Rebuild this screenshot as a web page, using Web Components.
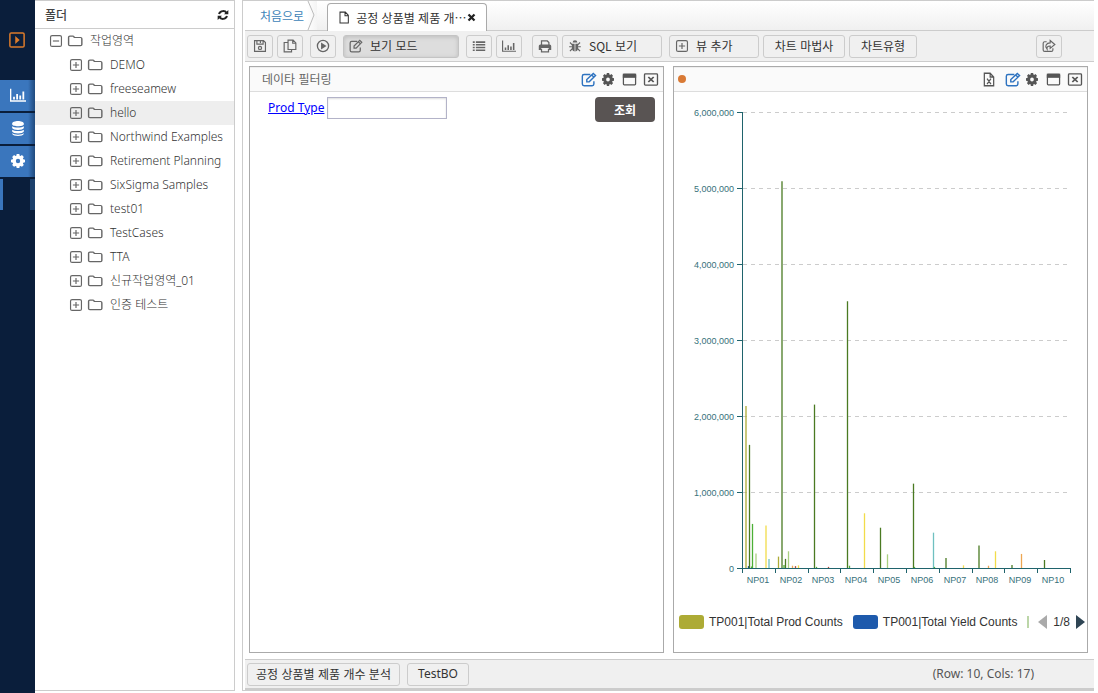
<!DOCTYPE html>
<html lang="ko">
<head>
<meta charset="utf-8">
<title>공정 상품별 제품 개수 분석</title>
<style>
html,body{height:100%;margin:0}
body{--kr:"Noto Sans CJK KR","Noto Sans",sans-serif;font:12px/16px "Noto Sans","Noto Sans CJK KR",sans-serif;color:#333;background:#fff}
</style>
</head>
<body>
<bi-app></bi-app>
<script>
const ICONS={
play:'<rect x="1" y="1" width="16" height="16" rx="1.5" fill="none" stroke="currentColor" stroke-width="1.700"/><path d="M7 4.500l5 4.500-5 4.500z"/>',
chart:'<path d="M0 2h1.5v13H18v1.5H0zM3.500 11h2v3h-2zM7 8h2v6H7zM10.500 9.500h2V14h-2zM14 5h2v9h-2z"/>',
db:'<path d="M1.500 4c0-4 15-4 15 0v.8c0 3-15 3-15 0zM1.500 7c2 2 13 2 15 0v2c-1 3-14 3-15 0zM1.500 11c2 2 13 2 15 0v2c-1 3-14 3-15 0zM1.500 15c2 2 13 2 15 0v.5c-1 3.300-14 3.300-15 0z"/>',
gear:'<path fill-rule="evenodd" d="M7.300 2h3.400l.5 2.200 1 .4 1.900-1.200 2.400 2.400-1.200 1.900.4 1 2.300.6v3.400l-2.300.5-.4 1 1.200 1.900-2.400 2.400-1.900-1.200-1 .4-.5 2.300H7.300l-.5-2.300-1-.4-1.900 1.200-2.400-2.400 1.200-1.900-.4-1L0 12.700V9.300l2.300-.6.4-1-1.200-1.900 2.400-2.400 1.900 1.200 1-.4zM9 8.200a2.800 2.800 0 1 0 0 5.600 2.800 2.800 0 0 0 0-5.600z" transform="translate(0 -2)"/>',
refresh:'<path fill="none" stroke="currentColor" stroke-width="3" d="M3 7.500C5 2 12 2 14.500 6M15 10.500C13 16 6 16 3.500 12"/><path d="M17 1.500v6.500h-6.500zM1 16.500V10h6.500z"/>',
folder:'<path fill="none" stroke="currentColor" stroke-width="1.6" d="M1.800 4.300q0-1.500 1.500-1.500h3.500q1 0 1.400 1.700h7q1.500 0 1.500 1.500v7.500q0 1.500-1.500 1.500h-12q-1.400 0-1.400-1.500z"/>',
plus:'<rect x="2" y="2" width="14" height="14" rx="2" fill="none" stroke="currentColor" stroke-width="1.500"/><path fill="none" stroke="currentColor" stroke-width="1.500" d="M9 5v8M5 9h8"/>',
minus:'<rect x="2" y="2" width="14" height="14" rx="2" fill="none" stroke="currentColor" stroke-width="1.500"/><path fill="none" stroke="currentColor" stroke-width="1.500" d="M5 9h8"/>',
file:'<path fill="none" stroke="currentColor" stroke-width="1.500" d="M3 1.500h8l4.500 4.500v10.500H3zM10.500 1.500V6.500h5"/>',
close:'<path fill="none" stroke="currentColor" stroke-width="4.500" d="M3 3l12 12M15 3L3 15"/>',
save:'<path fill="none" stroke="currentColor" stroke-width="1.500" d="M2 2h11.500L16 4.500V16H2zM5 2v4.500h8V2M9.500 3v2"/><circle cx="9" cy="11.500" r="2" fill="none" stroke="currentColor" stroke-width="1.600"/>',
copy:'<path fill="none" stroke="currentColor" stroke-width="1.500" d="M6.500 1.500h6.500l3.500 3.500v8.500h-10zM12.500 1.500V5.500h4M6.500 4.500h-5v12h9.500v-3"/>',
run:'<circle cx="9" cy="9" r="7.200" fill="none" stroke="currentColor" stroke-width="1.700"/><path d="M6.500 4.500L13.500 9l-7 4.500z"/>',
edit:'<path fill="none" stroke="currentColor" stroke-width="1.600" d="M10.500 3H3.500Q1.500 3 1.500 5v9.500q0 2 2 2h9q2 0 2-2V11M6.500 11.800V9L13.800 1.700l2.600 2.600L9.200 11.800zM12 3.500l2.700 2.700"/>',
list:'<path d="M1 3h2.500v2H1zM5 3h12v2H5zM1 6.500h2.500v2H1zM5 6.500h12v2H5zM1 10h2.500v2H1zM5 10h12v2H5zM1 13.500h2.500v2H1zM5 13.500h12v2H5z"/>',
print:'<path fill="none" stroke="currentColor" stroke-width="1.600" d="M4.500 8V2.500h7.500l2 2V8M4.500 12.500v4h9v-4"/><path d="M1 9q0-2 2-2h12q2 0 2 2v5h-3v-2.500H4V14H1z"/>',
bug:'<path d="M6 4.500a3 3 0 0 1 6 0zM5 6h3.500v10C6 16 5 13.500 5 11zM9.500 6H13v5c0 2.500-1 5-3.500 5z"/><path fill="none" stroke="currentColor" stroke-width="1.500" d="M2.500 4.500L5.500 7.500M1.500 10H5M2.500 15.500l3-3M15.500 4.500l-3 3M16.500 10H13M15.500 15.500l-3-3"/>',
share:'<path fill="none" stroke="currentColor" stroke-width="1.500" d="M6 3.500H3.500q-2 0-2 2V14q0 2 2 2h8.500q2 0 2-2v-2M10.500 2l6 5-6 5V9C7 9 6 10.500 6.500 13 3 9.500 5.500 5 10.500 5z"/>',
win:'<rect x="1.700" y="2.700" width="14.600" height="12.600" rx="1" fill="none" stroke="currentColor" stroke-width="1.500"/><path d="M1 2h16v5H1z"/>',
xbox:'<rect x="1.700" y="2.200" width="14.600" height="13.600" rx="1" fill="none" stroke="currentColor" stroke-width="1.500"/><path fill="none" stroke="currentColor" stroke-width="2" d="M6 6l6 6M12 6l-6 6"/>',
excel:'<path fill="none" stroke="currentColor" stroke-width="1.600" d="M3 1.500h7.500l4.500 4.500v10.500H3zM10.500 1.500V6H15M6.500 8l5 6.500M11.500 8l-5 6.500"/>'
};
function define(name,html,init){
  const t=document.createElement('template');t.innerHTML=html;
  customElements.define(name,class extends HTMLElement{
    connectedCallback(){
      if(this.shadowRoot)return;
      this.attachShadow({mode:'open'}).append(t.content.cloneNode(true));
      if(init)init(this,this.shadowRoot);
    }
  });
}
define('bi-icon','<style>:host{display:block;flex:none;width:var(--w,14px);height:var(--h,14px)}svg{display:block;width:100%;height:100%}</style><svg viewBox="0 0 18 18" preserveAspectRatio="none" fill="currentColor" aria-hidden="true"></svg>',
  (e,r)=>{r.querySelector('svg').innerHTML=ICONS[e.getAttribute('name')];});

define('bi-rail',`<style>
:host{display:flex;flex-direction:column;background:#0a1e3b;box-sizing:border-box;color:#fff}
button{all:unset;display:flex;align-items:center;justify-content:center;height:31px;margin-bottom:2px;background:linear-gradient(90deg,#3a76bd 80%,#204a7d);box-sizing:border-box;padding:0 0 2px 0}
.run{background:none;color:#db7b2b;height:80px;margin:0;padding:0 1px 0 0}
.gap{height:31px;border-left:3px solid #3a76bd;border-right:5px solid #1c406c}
bi-icon{--w:16px;--h:16px}
bi-icon[name=gear]{--w:14px;--h:14px}
bi-icon[name=db]{--w:14px}
</style>
<button class="run" aria-label="실행"><bi-icon name="play"></bi-icon></button>
<button aria-label="차트"><bi-icon name="chart"></bi-icon></button>
<button aria-label="데이터"><bi-icon name="db"></bi-icon></button>
<button aria-label="설정"><bi-icon name="gear"></bi-icon></button>
<div class="gap"></div>`);

define('bi-folder',`<style>
:host{display:flex;align-items:center;gap:4px;height:24px;padding-left:34px;color:#333;font-weight:300}
:host([root]){padding-left:14px}
:host([selected]){background:#eee}
button{all:unset}
bi-icon{--w:14px;--h:14px;color:#666}
bi-icon[name=folder]{--w:16px;--h:14px}
span{padding-left:3px;white-space:nowrap}
</style><button aria-label="펼치기"></button><bi-icon name="folder"></bi-icon><span><slot></slot></span>`,
(e,r)=>{r.querySelector('button').innerHTML='<bi-icon name="'+(e.hasAttribute('root')?'minus':'plus')+'"></bi-icon>';});

define('bi-tree',`<style>
:host{display:block;border:1px solid #ccc;border-left:0;box-sizing:border-box;background:#fff}
header{display:flex;align-items:center;justify-content:space-between;height:27px;padding:0 5px 0 10px;border-bottom:1px solid #ccc}
h2{margin:0;font:500 12px/16px var(--kr);color:#444}
button{all:unset;color:#222}
bi-icon{--w:12px;--h:12px}
</style><header><h2>폴더</h2><button aria-label="새로고침"><bi-icon name="refresh"></bi-icon></button></header>
<bi-folder root>작업영역</bi-folder><bi-folder>DEMO</bi-folder><bi-folder>freeseamew</bi-folder><bi-folder selected>hello</bi-folder><bi-folder>Northwind Examples</bi-folder><bi-folder>Retirement Planning</bi-folder><bi-folder>SixSigma Samples</bi-folder><bi-folder>test01</bi-folder><bi-folder>TestCases</bi-folder><bi-folder>TTA</bi-folder><bi-folder>신규작업영역_01</bi-folder><bi-folder>인증 테스트</bi-folder>`);

define('bi-tabs',`<style>
:host{display:flex;height:29px;background:linear-gradient(#fff,#f0f0f0);align-items:flex-end;border-bottom:1px solid #ccc;font-family:var(--kr)}
.home{display:flex;align-items:center;height:29px;padding-left:15px;background:#fff;color:#3d84b8;text-decoration:none}
.home svg{display:block;margin-left:3px;background:linear-gradient(90deg,#fff,#f4f4f4)}
.tab{display:flex;align-items:center;box-sizing:border-box;width:160px;height:28px;margin:0 0 -1px 10px;padding:0 10px;border:1px solid #aaa;border-bottom:0;border-radius:4px 4px 0 0;background:#fff;color:#333}
.tab span{padding-left:6px;flex:1;white-space:nowrap}
button{all:unset;color:#222}
</style><a class="home" href="#">처음으로<svg width="10" height="29"><path d="M1 0L7 14L1 29" fill="none" stroke="#bbb"/></svg></a>
<div class="tab"><bi-icon name="file" style="--w:12px;--h:13px"></bi-icon><span>공정 상품별 제품 개⋯</span><button aria-label="닫기"><bi-icon name="close" style="--w:9px;--h:9px"></bi-icon></button></div>`);

define('bi-button',`<style>
:host{display:block;flex:none}
button{display:flex;align-items:center;justify-content:center;gap:7px;box-sizing:border-box;width:var(--bw,26px);height:23px;padding:0 5px;border:1px solid #ccc;border-radius:3px;background:#f0f0f0;color:#333;font:inherit;white-space:nowrap}
:host([start]) button{justify-content:flex-start;font-family:var(--kr)}
:host([kr]) button{font-family:var(--kr)}
:host([active]) button{background:#ddd;border-color:#c4c4c4;box-shadow:inset 0 1px 4px #bbb}
bi-icon{color:#666;--w:14px;--h:14px}
slot{display:block}
</style><button><slot></slot></button>`,(e,r)=>{
const b=r.querySelector('button'),i=e.getAttribute('icon');
if(i)b.insertAdjacentHTML('afterbegin','<bi-icon name="'+i+'"></bi-icon>');
if(e.getAttribute('label')){b.setAttribute('aria-label',e.getAttribute('label'));r.querySelector('slot').remove();}});

define('bi-toolbar',`<style>
:host{display:flex;align-items:center;gap:4px;height:30px;padding:0 32px 0 2px;background:#f0f0f0;border-bottom:1px solid #ccc}
.g{margin-left:3px}.gg{margin-left:6px}.end{margin-left:auto}
</style>
<bi-button icon="save" label="저장"></bi-button><bi-button icon="copy" label="복사"></bi-button>
<bi-button class="g" icon="run" label="실행"></bi-button>
<bi-button class="g" icon="edit" start active style="--bw:116px">보기 모드</bi-button>
<bi-button class="g" icon="list" label="목록"></bi-button><bi-button icon="chart" label="차트"></bi-button>
<bi-button class="gg" icon="print" label="인쇄"></bi-button><bi-button icon="bug" start style="--bw:100px;--kr:inherit">SQL 보기</bi-button>
<bi-button class="g" icon="plus" start style="--bw:90px">뷰 추가</bi-button><bi-button kr style="--bw:82px">차트 마법사</bi-button><bi-button kr style="--bw:68px">차트유형</bi-button>
<bi-button class="end" icon="share" label="공유"></bi-button>`);

define('bi-panel',`<style>
:host{display:flex;flex-direction:column;min-width:0;border:1px solid #aaa;box-sizing:border-box;background:#fff}
header{display:flex;align-items:center;height:21px;padding:1px 4px 1px 12px;border-top:1px solid #eee;border-bottom:1px solid #ddd;background:#fafafa;color:#666}
.t{flex:1;padding-bottom:1px;font-family:var(--kr)}
.acts{display:flex;align-items:center;gap:7px;color:#555}
.acts button{all:unset}
.dot{width:8px;height:8px;margin-left:-8px;border-radius:50%;background:#d97a35}
.body{flex:1;display:flex;flex-direction:column}
</style><header><div class="t"></div><div class="acts"></div></header><div class="body"><slot></slot></div>`,(e,r)=>{
const h=e.getAttribute('heading'),t=r.querySelector('.t');
if(h)t.textContent=h;else t.innerHTML='<div class="dot"></div>';
const mk=(n,l,w,x='')=>`<button aria-label="${l}" style="${x}"><bi-icon name="${n}" style="--w:${w}px;--h:${n=='gear'?13:15}px"></bi-icon></button>`;
r.querySelector('.acts').innerHTML=(e.hasAttribute('excel')?mk('excel','엑셀',14,'margin-right:2px'):'')+mk('edit','편집',16,'color:#2e73c0;margin-right:-2px')+mk('gear','설정',12,'margin-right:1px')+mk('win','최대화',15,'margin-right:-1px')+mk('xbox','닫기',16);});

define('bi-filter',`<style>
:host{display:flex;align-items:flex-start;padding:5px 8px 0 18px}
label{display:flex;align-items:center;gap:3px;flex:1}
label a{color:#00f}
input{box-sizing:border-box;width:120px;height:22px;border:1px solid #b3b3c8;background:#fff;padding:0 4px;box-shadow:inset 0 1px 2px #ddd;font:inherit}
button{width:60px;height:25px;border:0;border-radius:4px;background:#595453;color:#fff;font:700 12px/16px var(--kr)}
</style><label><a href="#">Prod Type</a><input type="text" aria-label="Prod Type"></label><button>조회</button>`);

define('bi-chart',`<style>
:host{display:block;flex:1;padding-top:1px}
svg{display:block;width:100%;height:auto}
text{font:9px "Liberation Sans",sans-serif;fill:#37717a}
.legend{display:flex;align-items:center;height:42px;padding:0 2px 0 5px;font:12px/16px "Liberation Sans",sans-serif;color:#333;white-space:nowrap}
i{flex:none;width:25px;height:14px;border-radius:3px;margin-right:5px}
.item{display:flex;align-items:center;margin-right:10px}
.cut{width:2px;height:12px;background:#bcd6a8}
.nav{display:flex;align-items:center;gap:6px;margin-left:auto}
.nav button{all:unset;width:0;height:0;border:solid transparent;border-width:7px 0}
.nav .p{border-right:9px solid #aaa}.nav .n{border-left:9px solid #2f4554}
</style><svg viewBox="0 0 413 508" role="img" aria-label="제품별 막대 차트"></svg>
<div class="legend"><span class="item"><i style="background:#adab35"></i>TP001|Total Prod Counts</span><span class="item"><i style="background:#1e5aac"></i>TP001|Total Yield Counts</span><span class="cut"></span><div class="nav"><button class="p" aria-label="이전"></button>1/8<button class="n" aria-label="다음"></button></div></div>`,(e,r)=>{
const O='#adab35',D='#4a7a22',G='#4cb035',L='#a9cf80',Y='#f2dc4a',T='#6fc0c0',R='#eda652',B='#1e4a7a';
/* position on the category axis, value in thousands, colour */
const bars=[[3.5,2130,O],[6,25,B],[7,1620,D],[9,20,G],[10,580,G],[13.500,190,L],[23.500,560,Y],[26.500,120,T],
[36,150,O],[39.500,5090,D],[41.500,40,G],[43,120,D],[46,220,L],[50,30,R],[53,25,'#b04a3a'],[56,35,Y],
[72,2150,D],[74,15,G],[86,15,'#b04a3a'],[105,3510,D],[107,30,G],[122,720,Y],[138,530,D],[145,180,L],
[171,1110,D],[172,15,G],[191,465,T],[192,15,G],[203.500,130,D],[221,35,Y],[236.500,295,D],[246,30,R],[253,220,Y],[269.500,40,D],[279,185,R],[302,105,D]];
let s='';
for(let i=0;i<=6;i++){const y=475.5-76*i;
 if(i)s+=`<path d="M69 ${y}H393" stroke="#ccc" stroke-dasharray="4 4"/>`;
 s+=`<path d="M63 ${y}h5" stroke="#1f636c"/><text x="60" y="${y+3}" text-anchor="end">${i?i+',000,000':0}</text>`;}
for(const [x,v,c] of bars)s+=`<path d="M${68.5+x} 475V${475-v*.076}" stroke="${c}" stroke-width="1.3"/>`;
s+='<path d="M68.500 19V476M68 475.500H397" stroke="#1f636c" fill="none"/>';
for(let i=0;i<=10;i++)s+=`<path d="M${Math.round(68+32.8*i)+.5} 476v4" stroke="#1f636c"/>`;
for(let i=1;i<=10;i++)s+=`<text x="${Math.round(51+32.8*i)}" y="490" text-anchor="middle">NP${String(i).padStart(2,'0')}</text>`;
r.querySelector('svg').innerHTML=s;});

define('bi-status',`<style>
:host{display:flex;align-items:center;gap:7px;height:28px;padding:0 60px 0 2px;background:#f0f0f0;border-top:1px solid #ccc;border-bottom:2px solid #ccc}
span{margin-left:auto;color:#555}
</style><bi-button kr style="--bw:153px">공정 상품별 제품 개수 분석</bi-button><bi-button style="--bw:62px">TestBO</bi-button><span>(Row: 10, Cols: 17)</span>`);

define('bi-app',`<style>
:host{display:grid;grid-template-columns:35px 200px 7px minmax(0,1fr);min-height:100vh;box-sizing:border-box;padding-right:4px}
bi-tree{margin-bottom:2px}
.split{display:flex;align-items:center;justify-content:center}
.grip{width:4px;height:24px;background:radial-gradient(#aab 40%,transparent 45%) 0 0/2px 2px}
main{display:flex;flex-direction:column;border:1px solid #ccc;border-right:0;margin-bottom:2px;padding-left:2px}
.views{flex:1;display:grid;grid-template-columns:minmax(0,1fr) minmax(0,1fr);gap:9px;padding:4px 6px 6px 4px}
</style><bi-rail></bi-rail><bi-tree></bi-tree><div class="split"><div class="grip"></div></div>
<main><bi-tabs></bi-tabs><bi-toolbar></bi-toolbar><div class="views"><bi-panel heading="데이타 필터링"><bi-filter></bi-filter></bi-panel><bi-panel excel><bi-chart></bi-chart></bi-panel></div><bi-status></bi-status></main>`);
</script>
</body>
</html>
